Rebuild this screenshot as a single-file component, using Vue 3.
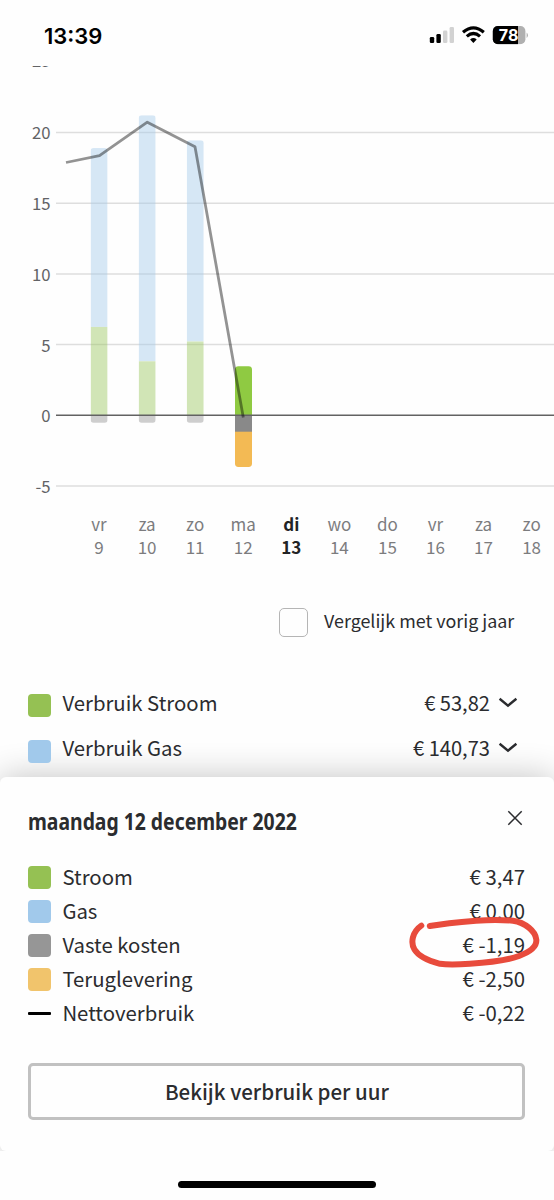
<script setup>
const ticks = [25, 20, 15, 10, 5, 0, -5];

const days = [
  { name: "vr", date: 9 },
  { name: "za", date: 10 },
  { name: "zo", date: 11 },
  { name: "ma", date: 12 },
  { name: "di", date: 13, today: true },
  { name: "wo", date: 14 },
  { name: "do", date: 15 },
  { name: "vr", date: 16 },
  { name: "za", date: 17 },
  { name: "zo", date: 18 },
];

const bars = [
  { stroom: 6.25, top: 18.9, bottom: -0.52 },
  { stroom: 3.82, top: 21.22, bottom: -0.52 },
  { stroom: 5.22, top: 19.45, bottom: -0.52 },
];

const totals = [
  { label: "Verbruik Stroom", amount: "€ 53,82", color: "green" },
  { label: "Verbruik Gas", amount: "€ 140,73", color: "blue" },
];

const details = [
  { label: "Stroom", amount: "€ 3,47", color: "green" },
  { label: "Gas", amount: "€ 0,00", color: "blue" },
  { label: "Vaste kosten", amount: "€ -1,19", color: "gray" },
  { label: "Teruglevering", amount: "€ -2,50", color: "orange" },
  { label: "Nettoverbruik", amount: "€ -0,22", color: "line" },
];

// chart scale
const x = (i) => 99 + i * 48.07;
const y = (value) => 349.3 - value * 14.14;

// the top label is partly scrolled out of view
const labelY = (tick) => y(tick) + (tick === 25 ? 5 : 6.9);
</script>

<template>
  <div class="phone">
    <header class="status">
      <span class="time">13:39</span>
      <svg class="status-icons" width="100" height="22" viewBox="0 0 100 22">
        <rect x="1.8" y="12" width="4.4" height="6" rx="1.3" />
        <rect x="8.4" y="9" width="4.4" height="9" rx="1.3" />
        <rect x="15" y="5.6" width="4.4" height="12.4" rx="1.3" fill="#d2d2d2" />
        <rect x="21.6" y="2" width="4.4" height="16" rx="1.3" fill="#d2d2d2" />
        <g fill="none" stroke="#000" stroke-width="3.2">
          <path d="M35 7.2Q45.4 -1.6 55.8 7.2" />
          <path d="M38.8 11.4Q45.4 5.6 52 11.4" />
        </g>
        <path d="M42.1 14.4Q45.4 11.6 48.7 14.4L45.4 17.9Z" />
        <clipPath id="battery"><rect x="64.8" y="1" width="32.6" height="18.2" rx="5" /></clipPath>
        <g clip-path="url(#battery)">
          <rect x="64" y="1" width="34" height="18.4" fill="#b0b0b0" />
          <rect x="64" y="1" width="26" height="18.4" />
        </g>
        <path d="M98.6 7.4q1.4 1 1.4 2.8t-1.4 2.8z" fill="#b0b0b0" />
        <text class="battery-text" x="80.6" y="16" text-anchor="middle">78</text>
      </svg>
    </header>

    <svg class="chart" width="554" height="504" viewBox="0 0 554 504">
      <g class="ticks">
        <template v-for="tick in ticks" :key="tick">
          <line v-if="tick" x1="56" x2="554" :y1="y(tick)" :y2="y(tick)" class="grid" />
          <text x="50.6" :y="labelY(tick)" text-anchor="end">{{ tick }}</text>
        </template>
      </g>

      <g v-for="(bar, i) in bars" :key="i">
        <clipPath :id="'bar' + i">
          <rect :x="x(i) - 8.4" :y="y(bar.top)" width="17" :height="y(bar.bottom) - y(bar.top)" rx="3" />
        </clipPath>
        <g :clip-path="`url(#bar${i})`" opacity="0.42">
          <rect :x="x(i) - 8.4" :y="y(bar.top)" width="17" :height="y(bar.stroom) - y(bar.top)" fill="#a0c9ea" />
          <rect :x="x(i) - 8.4" :y="y(bar.stroom)" width="17" :height="y(0) - y(bar.stroom)" fill="#95c454" />
          <rect :x="x(i) - 8.4" :y="y(0)" width="17" height="10" fill="#8c8c8c" />
        </g>
      </g>

      <clipPath id="selected"><rect x="235" y="300.2" width="17" height="100.8" rx="3.4" /></clipPath>
      <g clip-path="url(#selected)">
        <rect x="235" y="300" width="17" height="50" fill="#8fca42" />
        <rect x="235" y="349.3" width="17" height="17" fill="#898989" />
        <rect x="235" y="365.7" width="17" height="36" fill="#f3ba54" />
      </g>

      <line x1="56" x2="554" :y1="y(0)" :y2="y(0)" class="zero" />
      <polyline class="netto" points="66,96.5 99.5,89.6 147.3,56.2 195,80.8 243.3,351.5" />

      <g class="days">
        <g v-for="(day, i) in days" :key="day.date" :class="{ today: day.today }">
          <text :x="x(i)" y="464.8">{{ day.name }}</text>
          <text :x="x(i)" y="488.3">{{ day.date }}</text>
        </g>
      </g>
    </svg>

    <label class="compare">
      <span class="checkbox"></span>
      <span class="compare-text">Vergelijk met vorig jaar</span>
    </label>

    <ul class="totals">
      <li v-for="row in totals" :key="row.label">
        <i class="swatch" :class="row.color"></i>
        <span class="label">{{ row.label }}</span>
        <span>{{ row.amount }}</span>
        <svg class="chevron" width="20" height="12" viewBox="0 0 20 12">
          <path d="M1.6 1.8L10 8.6L18.4 1.8" />
        </svg>
      </li>
    </ul>

    <section class="sheet">
      <div class="sheet-head">
        <h2><span>maandag 12 december 2022</span></h2>
        <svg class="close" width="16" height="16" viewBox="0 0 16 16">
          <path d="M1.3 1.3L14.7 14.7M14.7 1.3L1.3 14.7" />
        </svg>
      </div>
      <ul class="details">
        <li v-for="row in details" :key="row.label">
          <i class="swatch" :class="row.color"></i>
          <span class="label">{{ row.label }}</span>
          <span class="amount">{{ row.amount }}</span>
        </li>
      </ul>
      <button class="hourly">Bekijk verbruik per uur</button>
    </section>

    <footer class="home"><span></span></footer>

    <svg class="marker" width="140" height="60" viewBox="404 912 140 60">
      <path
        d="M421.3 925.6C412 932 410.5 943 414.5 949.5C419 957 429 961 440 963.8C447 964.8 461 964.4 470 963.8C488 962.6 507 960.5 519 956C530 952 537 946 536.3 939.5C535.5 931 525 922.5 513 920.7C505 920 486 920 476 920.7C460 922 441 924 429.8 926"
      />
    </svg>
  </div>
</template>

<style>
body {
  background: #fefefe;
}
</style>

<style scoped>
.phone {
  position: relative;
  display: flex;
  flex-direction: column;
  width: 554px;
  height: 1200px;
  overflow: hidden;
  background: #fefefe;
  color: #2b2c2f;
  font: 20.1px/24px "Noto Sans CJK SC", "Noto Sans", sans-serif;
}

.status {
  display: flex;
  justify-content: space-between;
  height: 66px;
  padding: 25px 26px 0 44px;
  box-sizing: border-box;
  color: #000;
}

.time {
  font: 600 22px/22px Inter, sans-serif;
}

.battery-text {
  font: 700 16px Inter, sans-serif;
  fill: #fff;
}

.chart {
  display: block;
  flex: none;
}

.ticks text {
  font-size: 16.7px;
  fill: #626366;
}

.grid {
  stroke: #dedede;
  stroke-width: 1.5;
}

.zero {
  stroke: #626262;
  stroke-width: 1.5;
}

.netto {
  fill: none;
  stroke: #000;
  stroke-opacity: 0.42;
  stroke-width: 2.8;
  stroke-linejoin: round;
}

.days text {
  font-size: 17px;
  text-anchor: middle;
  fill: #7c7c7e;
}

.days .today text {
  font-weight: 700;
  fill: #222325;
}

.compare {
  display: flex;
  align-items: center;
  gap: 16px;
  height: 29px;
  margin: 38px 40px 0 279px;
  font-size: 17.9px;
  white-space: nowrap;
}

.compare-text {
  padding-bottom: 5px;
}

.checkbox {
  flex: none;
  width: 29px;
  height: 29px;
  box-sizing: border-box;
  border: 1px solid #b5b5b5;
  border-radius: 5px;
}

ul {
  margin: 0;
  padding: 0;
  list-style: none;
}

li {
  display: flex;
  align-items: center;
}

.label {
  flex: 1;
  padding-bottom: 2px;
  font-size: 20.35px;
}

.amount {
  padding-bottom: 2px;
}

.swatch {
  width: 23px;
  height: 23px;
  margin-right: 11px;
  border-radius: 4px;
}

.green {
  background: #95c153;
}

.blue {
  background: #a1c9eb;
}

.gray {
  background: #969696;
}

.orange {
  background: #f1c46c;
}

.line {
  height: 3px;
  border-radius: 1px;
  background: #000;
}

.totals {
  height: 140px;
  padding: 43px 36px 0 28.4px;
  box-sizing: border-box;
}

.totals li {
  height: 45.5px;
}

.totals .swatch {
  position: relative;
  top: 3px;
}

.chevron {
  margin-left: 8px;
  fill: none;
  stroke: #2b2c2f;
  stroke-width: 2.4;
}

.sheet {
  flex: none;
  height: 374px;
  padding: 29px 29px 0 28.4px;
  box-sizing: border-box;
  border-radius: 6px;
  background: #fefefe;
  box-shadow: 0 0 34px rgba(0, 0, 0, 0.24);
}

.sheet-head {
  display: flex;
  justify-content: space-between;
  height: 54px;
}

h2 {
  margin: 0;
  font: 700 22.5px/32px "Noto Sans", sans-serif;
  white-space: nowrap;
}

h2 span {
  display: inline-block;
  transform: scaleX(0.86);
  transform-origin: left;
}

.close {
  margin: 4px 2px 0 0;
  fill: none;
  stroke: #2b2c2f;
  stroke-width: 1.5;
}

.details {
  font-size: 20.35px;
}

.details li {
  height: 34.1px;
}

.hourly {
  display: block;
  width: 497px;
  height: 57px;
  margin-top: 32.5px;
  padding: 0 0 1px;
  border: 3px solid #c1c1c1;
  border-radius: 5px;
  background: none;
  color: #2b2c2f;
  font: 500 20.5px/24px "Noto Sans CJK SC", sans-serif;
}

.home {
  position: relative;
  display: flex;
  flex: 1;
  justify-content: center;
  padding-top: 30px;
  background: #fefefe;
}

.home span {
  width: 198px;
  height: 7px;
  border-radius: 4px;
  background: #000;
}

/* hand-drawn circle around the fixed costs */
.marker {
  position: absolute;
  left: 404px;
  top: 912px;
  fill: none;
  stroke: #e84b3c;
  stroke-width: 6;
  stroke-linecap: round;
}
</style>
